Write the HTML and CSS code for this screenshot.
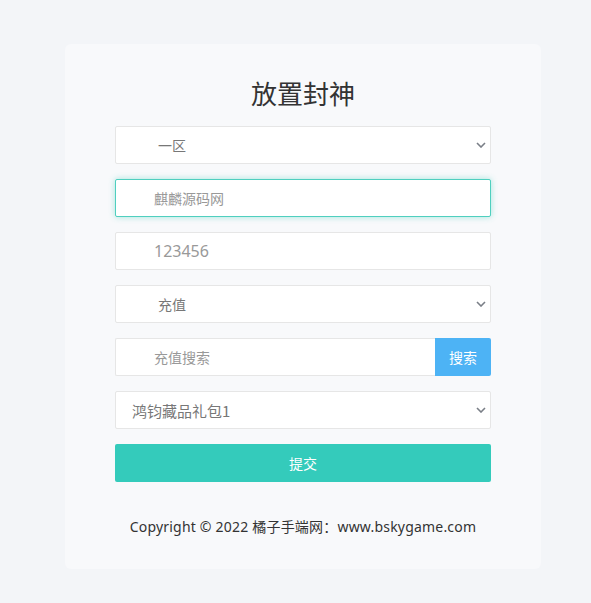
FILE: index.html
```html
<!DOCTYPE html>
<html>
<head>
  <meta charset="utf-8">
  <title>放置封神</title>
  <link rel="stylesheet" href="styles.css">
</head>
<body>

<div class="mainCard">
  <h1 class="mainTitle">放置封神</h1>

  <div class="formBox">
    <div class="selectWrap">
      <select class="formSelect indentBig">
        <option>一区</option>
      </select>
      <svg class="selectArrow" width="10" height="6" viewBox="0 0 10 6"><path d="M1 1l4 4 4-4" fill="none" stroke="#7a7f87" stroke-width="1.6"/></svg>
    </div>

    <input class="formInput focused" type="text" placeholder="麒麟源码网">

    <input class="formInput numText" type="text" placeholder="123456">

    <div class="selectWrap">
      <select class="formSelect indentBig">
        <option>充值</option>
      </select>
      <svg class="selectArrow" width="10" height="6" viewBox="0 0 10 6"><path d="M1 1l4 4 4-4" fill="none" stroke="#7a7f87" stroke-width="1.6"/></svg>
    </div>

    <div class="searchRow">
      <input class="formInput searchInput" type="text" placeholder="充值搜索">
      <button class="searchBtn">搜索</button>
    </div>

    <div class="selectWrap">
      <select class="formSelect indentSmall">
        <option>鸿钧藏品礼包1</option>
      </select>
      <svg class="selectArrow" width="10" height="6" viewBox="0 0 10 6"><path d="M1 1l4 4 4-4" fill="none" stroke="#7a7f87" stroke-width="1.6"/></svg>
    </div>

    <button class="submitBtn">提交</button>
  </div>

  <p class="copyText">Copyright © 2022 橘子手端网：www.bskygame.com</p>
</div>

</body>
</html>
```

FILE: styles.css
```css
body {
  margin: 0;
  background-color: #f3f5f8;
  font-family: "Noto Sans", "Noto Sans CJK SC", sans-serif;
}

.mainCard {
  width: 476px;
  margin: 44px 0 0 65px;
  height: 525px;
  box-sizing: border-box;
  background-color: #f8f9fb;
  border-radius: 6px;
  display: flex;
  flex-direction: column;
  align-items: center;
  padding-top: 34px;
}

.mainTitle {
  margin: 0 0 18px 0;
  font-size: 26px;
  font-weight: 400;
  color: #333;
  line-height: 30px;
  font-family: "Noto Sans CJK SC", sans-serif;
}

.formBox {
  width: 376px;
  display: flex;
  flex-direction: column;
  gap: 15px;
}

.selectWrap {
  position: relative;
  height: 38px;
}

.formSelect {
  appearance: none;
  -webkit-appearance: none;
  width: 100%;
  height: 38px;
  box-sizing: border-box;
  border: 1px solid #e6e6e6;
  border-radius: 2px;
  background-color: #fff;
  font-size: 14px;
  color: #777;
  font-family: "Noto Sans CJK SC", sans-serif;
  outline: none;
}

.indentBig {
  padding-left: 42px;
}

.indentSmall {
  padding-left: 16px;
  font-size: 15px;
}

.selectArrow {
  position: absolute;
  right: 5px;
  top: 16px;
  pointer-events: none;
}

.formInput {
  width: 100%;
  height: 38px;
  box-sizing: border-box;
  border: 1px solid #e6e6e6;
  border-radius: 2px;
  background-color: #fff;
  padding-left: 38px;
  font-size: 14px;
  font-family: "Noto Sans CJK SC", sans-serif;
  outline: none;
}

.formInput::placeholder {
  color: #999;
}

.numText {
  font-size: 16px;
  font-family: "Noto Sans", sans-serif;
}

.focused {
  border-color: #4fcfbf;
  box-shadow: 0 0 6px rgba(60, 205, 185, 0.45);
}

.searchRow {
  display: flex;
  height: 38px;
}

.searchInput {
  flex: 1;
  border-right: none;
  border-radius: 2px 0 0 2px;
}

.searchBtn {
  width: 56px;
  height: 38px;
  border: none;
  border-radius: 0 2px 2px 0;
  background-color: #4db3f5;
  color: #fff;
  font-size: 14px;
  font-family: "Noto Sans CJK SC", sans-serif;
  padding: 0;
}

.submitBtn {
  height: 38px;
  border: none;
  border-radius: 2px;
  background-color: #34cbbb;
  color: #fff;
  font-size: 14px;
  font-family: "Noto Sans CJK SC", sans-serif;
}

.copyText {
  margin: 35px 0 0 0;
  font-size: 14px;
  letter-spacing: 0.2px;
  color: #333;
  line-height: 20px;
}
```
